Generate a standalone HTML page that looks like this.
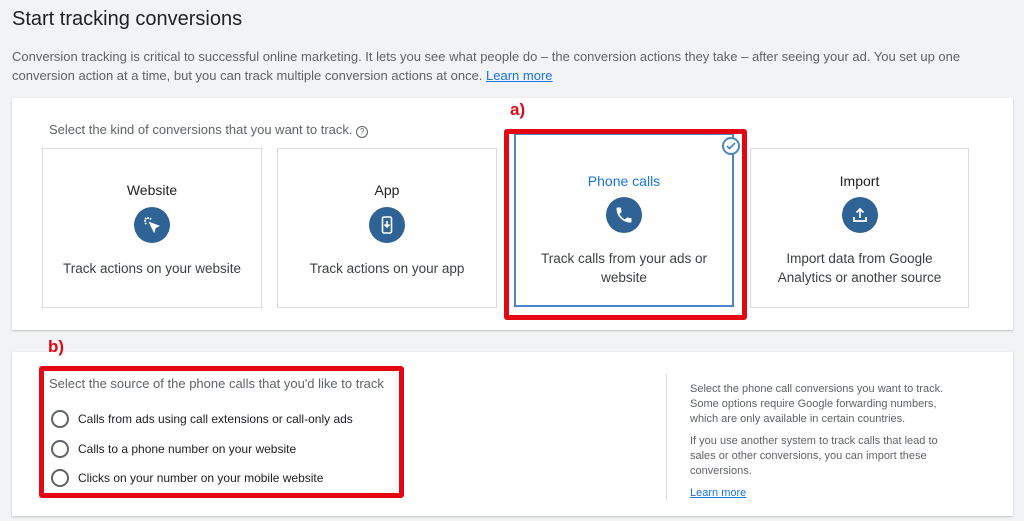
<!DOCTYPE html><html><head><style>
body{margin:0;width:1024px;height:521px;background:#f1f3f4;font-family:"Liberation Sans",sans-serif;position:relative;overflow:hidden;color:#3c4043}
.a{position:absolute}
.panel{position:absolute;background:#fff;box-shadow:0 1px 2px rgba(0,0,0,.2)}
.card{position:absolute;top:148px;width:220px;height:160px;border:1px solid #dadce0;background:#fff;text-align:center;box-sizing:border-box}
.card .t{position:absolute;left:0;right:0;font-size:14px;color:#202124}
.card .ic{position:absolute;left:50%;margin-left:-18px;width:36px;height:36px;border-radius:50%;background:#2f6396}
.card .d{position:absolute;left:10px;right:10px;font-size:13.5px;line-height:19px;color:#3c4043}
.ic svg{position:absolute;left:8px;top:8px}
.rad{position:absolute;left:51px;width:14px;height:14px;border:2px solid #5f6368;border-radius:50%}
.rl{position:absolute;left:78px;font-size:12px;color:#202124}
.red{position:absolute;border:5px solid #e30613;border-radius:3px}
</style></head><body>
<div class="a" style="left:12px;top:8px;font-size:20px;color:#202124">Start tracking conversions</div>
<div class="a" style="left:12px;top:47px;width:1000px;font-size:13px;line-height:19px;color:#5f6368">Conversion tracking is critical to successful online marketing. It lets you see what people do – the conversion actions they take – after seeing your ad. You set up one conversion action at a time, but you can track multiple conversion actions at once. <span style="color:#1a73e8;text-decoration:underline">Learn more</span></div>
<div class="panel" style="left:12px;top:98px;width:1001px;height:232px"></div>
<div class="a" style="left:49px;top:122px;font-size:13px;color:#5f6368">Select the kind of conversions that you want to track. <span style="display:inline-block;width:10px;height:10px;border:1px solid #5f6368;border-radius:50%;font-size:8px;text-align:center;line-height:10px">?</span></div>
<div class="a" style="left:510px;top:100px;font-size:17px;font-weight:bold;color:#e30613">a)</div>
<div class="card" style="left:42px"><div class="t" style="top:33px">Website</div><div class="ic" style="top:58px"><svg width="20" height="20" viewBox="0 0 20 20" fill="none" stroke="#fff" stroke-width="1.6"><path d="M8 8l8 3-3 1.5L12 16z" fill="#fff"/><path d="M6 2v2M2 6h2M3 3l1.5 1.5M9 3L8 4.5M3 9l1.5-1"/></svg></div><div class="d" style="top:110px">Track actions on your website</div></div>
<div class="card" style="left:277px"><div class="t" style="top:33px">App</div><div class="ic" style="top:58px"><svg width="20" height="20" viewBox="0 0 20 20" fill="none" stroke="#fff" stroke-width="1.6"><rect x="5.5" y="2" width="9" height="16" rx="1.5"/><path d="M10 6v6M7.5 9.5L10 12l2.5-2.5"/></svg></div><div class="d" style="top:110px">Track actions on your app</div></div>
<div class="card" style="left:514px;top:133px;width:220px;height:174px;border:2px solid #4a86c8"><div class="t" style="top:38px;color:#1a73e8">Phone calls</div><div class="ic" style="top:62px"><svg width="20" height="20" viewBox="0 0 24 24"><path fill="#fff" d="M6.6 10.8c1.4 2.8 3.8 5.1 6.6 6.6l2.2-2.2c.3-.3.7-.4 1-.2 1.1.4 2.3.6 3.6.6.6 0 1 .4 1 1V20c0 .6-.4 1-1 1C10.6 21 3 13.4 3 4c0-.6.4-1 1-1h3.5c.6 0 1 .4 1 1 0 1.3.2 2.5.6 3.6.1.3 0 .7-.2 1z"/></svg></div><div class="d" style="top:114px">Track calls from your ads or website</div></div>
<div class="a" style="left:722px;top:137px;width:18px;height:18px;border-radius:50%;background:#fff;border:2px solid #4a86c8;box-sizing:border-box"><svg width="14" height="14" viewBox="0 0 14 14" style="position:absolute;left:0;top:0"><path d="M3 7l2.5 2.5L11 4" stroke="#4a86c8" stroke-width="1.8" fill="none"/></svg></div>
<div class="red" style="left:504px;top:129px;width:233px;height:181px"></div>
<div class="card" style="left:750px;width:219px"><div class="t" style="top:24px">Import</div><div class="ic" style="top:48px"><svg width="20" height="20" viewBox="0 0 20 20" fill="none" stroke="#fff" stroke-width="1.7"><path d="M10 13V4M6.5 7.5L10 4l3.5 3.5M4 12v4h12v-4"/></svg></div><div class="d" style="top:100px">Import data from Google Analytics or another source</div></div>
<div class="panel" style="left:12px;top:352px;width:1001px;height:164px"></div>
<div class="a" style="left:48px;top:337px;font-size:17px;font-weight:bold;color:#e30613">b)</div>
<div class="a" style="left:49px;top:376px;font-size:13px;color:#5f6368">Select the source of the phone calls that you'd like to track</div>
<div class="rad" style="top:410px"></div><div class="rl" style="top:412px">Calls from ads using call extensions or call-only ads</div>
<div class="rad" style="top:440px"></div><div class="rl" style="top:442px">Calls to a phone number on your website</div>
<div class="rad" style="top:469px"></div><div class="rl" style="top:471px">Clicks on your number on your mobile website</div>
<div class="red" style="left:39px;top:366px;width:355px;height:122px"></div>
<div class="a" style="left:666px;top:374px;width:1px;height:126px;background:#dadce0"></div>
<div class="a" style="left:690px;top:382px;width:272px;font-size:11px;line-height:15px;color:#5f6368">Select the phone call conversions you want to track. Some options require Google forwarding numbers, which are only available in certain countries.<div style="height:7px"></div>If you use another system to track calls that lead to sales or other conversions, you can import these conversions.<div style="height:7px"></div><span style="color:#1a73e8;text-decoration:underline">Learn more</span></div>
</body></html>
